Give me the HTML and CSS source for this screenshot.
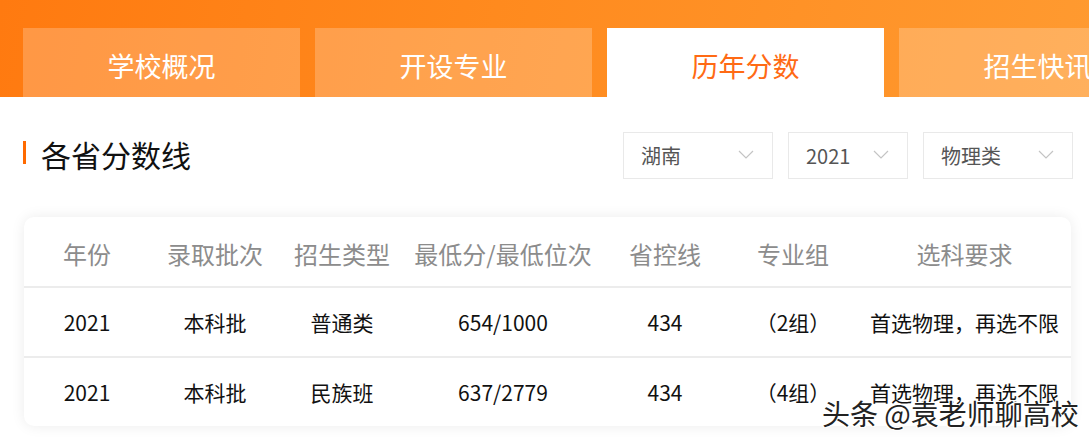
FILE: index.html
```html
<!DOCTYPE html>
<html lang="zh-CN">
<head>
<meta charset="utf-8">
<title>历年分数</title>
<link rel="stylesheet" href="styles.css">
</head>
<body>
<div class="topbar">
  <div class="tab">学校概况</div>
  <div class="tab">开设专业</div>
  <div class="tab active">历年分数</div>
  <div class="tab">招生快讯</div>
</div>

<div class="section">
  <div class="title-row">
    <div class="title"><span class="bar"></span><span class="title-text">各省分数线</span></div>
    <div class="filters">
      <div class="select w150"><span>湖南</span><svg class="chev" viewBox="0 0 16 9" width="16" height="9"><path d="M1 1 L8 8 L15 1" fill="none" stroke="#c4c4c4" stroke-width="1.2"/></svg></div>
      <div class="select w120"><span>2021</span><svg class="chev" viewBox="0 0 16 9" width="16" height="9"><path d="M1 1 L8 8 L15 1" fill="none" stroke="#c4c4c4" stroke-width="1.2"/></svg></div>
      <div class="select w150"><span>物理类</span><svg class="chev" viewBox="0 0 16 9" width="16" height="9"><path d="M1 1 L8 8 L15 1" fill="none" stroke="#c4c4c4" stroke-width="1.2"/></svg></div>
    </div>
  </div>

  <div class="card">
    <div class="row head">
      <div>年份</div><div>录取批次</div><div>招生类型</div><div>最低分/最低位次</div><div>省控线</div><div>专业组</div><div>选科要求</div>
    </div>
    <div class="row">
      <div>2021</div><div>本科批</div><div>普通类</div><div>654/1000</div><div>434</div><div>（2组）</div><div>首选物理，再选不限</div>
    </div>
    <div class="row">
      <div>2021</div><div>本科批</div><div>民族班</div><div>637/2779</div><div>434</div><div>（4组）</div><div>首选物理，再选不限</div>
    </div>
  </div>
</div>

<div class="watermark">头条 @袁老师聊高校</div>
</body>
</html>
```

FILE: styles.css
```css
html, body {
  margin: 0;
  padding: 0;
  background: #ffffff;
  font-family: "Noto Sans CJK SC", "Noto Sans", sans-serif;
  overflow: hidden;
}

body {
  width: 1089px;
  height: 437px;
  position: relative;
}

.topbar {
  height: 97px;
  box-sizing: border-box;
  padding: 28px 0 0 23px;
  display: flex;
  gap: 15px;
  overflow: hidden;
  background: linear-gradient(100deg, #ff7a10 0%, #ff8a1e 45%, #ff9a30 100%);
}

.tab {
  flex: 0 0 277px;
  height: 69px;
  display: flex;
  align-items: center;
  justify-content: center;
  padding-top: 6px;
  box-sizing: border-box;
  font-size: 27px;
  color: #ffffff;
  background: rgba(255, 255, 255, 0.22);
  line-height: 1;
}

.tab.active {
  background: #ffffff;
  color: #ff6a14;
}

.section {
  padding: 0 16px 0 23px;
}

.title-row {
  margin-top: 35px;
  height: 47px;
  display: flex;
  justify-content: space-between;
  align-items: center;
}

.title {
  display: flex;
  align-items: center;
  margin-top: -4px;
}

.bar {
  width: 3px;
  height: 23px;
  background: #ff6a00;
  margin-top: -3px;
}

.title-text {
  margin-left: 15px;
  font-size: 30px;
  line-height: 1;
  color: #111111;
}

.filters {
  display: flex;
  gap: 15px;
}

.select {
  height: 47px;
  box-sizing: border-box;
  border: 1px solid #e9e9e9;
  display: flex;
  align-items: center;
  justify-content: space-between;
  padding: 0 18px 0 17px;
  font-size: 20px;
  color: #555555;
  line-height: 1;
}

.w150 { width: 150px; }
.w120 { width: 120px; }

.chev {
  display: block;
  margin-top: -3px;
}

.card {
  margin-top: 38px;
  margin-left: 1px;
  width: 1047px;
  background: #ffffff;
  border-radius: 10px;
  box-shadow: 0 0 14px rgba(0, 0, 0, 0.08);
  overflow: hidden;
}

.row {
  display: grid;
  grid-template-columns: 126px 130px 124px 198px 126px 130px 213px;
  height: 68px;
  align-items: center;
  text-align: center;
  font-size: 21px;
  color: #111111;
  line-height: 1;
  border-top: 2px solid #ececec;
}

.row.head {
  border-top: none;
  height: 69px;
  font-size: 24px;
  color: #8c8c8c;
  padding-top: 5px;
  box-sizing: border-box;
}

.watermark {
  position: absolute;
  left: 822px;
  top: 397px;
  font-size: 28px;
  line-height: 1.2;
  color: #222222;
  white-space: nowrap;
  text-shadow: 1px 0 0 #fff, -1px 0 0 #fff, 0 1px 0 #fff, 0 -1px 0 #fff, 1px 1px 0 #fff, -1px -1px 0 #fff, 1px -1px 0 #fff, -1px 1px 0 #fff;
}
```
